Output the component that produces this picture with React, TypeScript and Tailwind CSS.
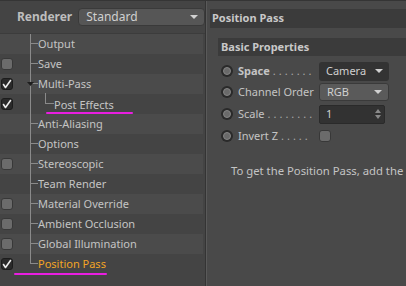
import React from "react";

type Row = { label: string; cb: "none" | "off" | "on"; indent?: boolean; tri?: boolean; last?: boolean; active?: boolean };

const rows: Row[] = [
  { label: "Output", cb: "none" },
  { label: "Save", cb: "off" },
  { label: "Multi-Pass", cb: "on", tri: true },
  { label: "Post Effects", cb: "on", indent: true },
  { label: "Anti-Aliasing", cb: "none" },
  { label: "Options", cb: "none" },
  { label: "Stereoscopic", cb: "off" },
  { label: "Team Render", cb: "none" },
  { label: "Material Override", cb: "off" },
  { label: "Ambient Occlusion", cb: "off" },
  { label: "Global Illumination", cb: "off" },
  { label: "Position Pass", cb: "on", last: true, active: true },
];

function Check() {
  return (
    <svg width="10" height="10" viewBox="0 0 10 10">
      <path d="M1.5 5.5 L3.5 8.5 L8.5 1.5" stroke="#ececec" strokeWidth="1.6" fill="none" strokeLinecap="round" strokeLinejoin="round" />
    </svg>
  );
}

function CheckBox({ on }: { on: boolean }) {
  return on ? (
    <div className="w-[12px] h-[12px] rounded-[3px] bg-[#2a2a2a] border border-[#1c1c1c] flex items-center justify-center">
      <Check />
    </div>
  ) : (
    <div className="w-[12px] h-[12px] rounded-[3px] bg-[#6b6b6b] border border-[#383838]" />
  );
}

function Radio() {
  return (
    <div className="w-[12px] h-[12px] shrink-0 rounded-full bg-[#2a2a2a] flex items-center justify-center">
      <div className="w-[8px] h-[8px] rounded-full bg-[#6a6a6a] border border-[#858585]" />
    </div>
  );
}

function Arrow() {
  return (
    <svg width="8" height="4" viewBox="0 0 8 4">
      <path d="M0 0 L8 0 L4 4 Z" fill="#d0d0d0" />
    </svg>
  );
}

function Dots({ n }: { n: number }) {
  return <span className="font-normal tracking-[3px] ml-[3px] text-[#a8a8a8]">{".".repeat(n)}</span>;
}

export default function App() {
  return (
    <div
      className="w-[406px] h-[286px] flex bg-[#474747] border-t border-[#353535] overflow-hidden text-[11px] text-[#c4c4c4]"
      style={{ fontFamily: '"Noto Sans", "Open Sans", sans-serif' }}
    >
      {/* left */}
      <div className="w-[205px] shrink-0 flex flex-col bg-[#444444]">
        <div className="h-[33px] flex items-center border-b border-[#3c3c3c]">
          <span className="ml-[17px] font-bold text-[#bdbdbd] text-[12px]">Renderer</span>
          <div className="ml-[6px] w-[128px] h-[18px] rounded-[4px] bg-[#565656] border border-[#3a3a3a] flex items-center justify-between pl-[7px] pr-[6px] text-[#d0d0d0] text-[12px]">
            <span>Standard</span>
            <Arrow />
          </div>
        </div>
        {rows.map((r, i) => (
          <div key={r.label} className={`h-[20px] flex items-stretch w-[203px] ${i % 2 === 0 ? "bg-[#4b4b4b]" : "bg-[#444444]"}`}>
            <div className="w-[30px] flex items-center pl-[1px]">
              {r.cb !== "none" && <CheckBox on={r.cb === "on"} />}
            </div>
            {r.indent ? (
              <>
                <div className="w-[15px] border-l border-[#8a8a8a]" />
                <div className="w-[9px] flex flex-col">
                  <div className="h-[10px] border-l border-b border-[#8a8a8a]" />
                </div>
              </>
            ) : (
              <div className="w-[8px] flex flex-col relative">
                <div className="h-[10px] border-l border-b border-[#8a8a8a]" />
                {!r.last && <div className="h-[10px] border-l border-[#8a8a8a]" />}
                {r.tri && (
                  <div className="absolute left-[-3px] top-[8px]">
                    <svg width="7" height="4" viewBox="0 0 7 4"><path d="M0 0 L7 0 L3.5 4 Z" fill="#1e1e1e" /></svg>
                  </div>
                )}
                {r.tri && <div className="absolute left-[15px] top-[19px] w-[1px] h-[1px] bg-[#8a8a8a]" />}
              </div>
            )}
            <div className="flex flex-col justify-center">
              <span className={`leading-[20px] whitespace-nowrap ${r.active ? "text-[#f3a425]" : ""}`}>{r.label}</span>
              {r.indent && <div className="h-[2px] -mt-[3px] -ml-[8px] w-[87px] bg-[#e81ee0] rounded-full" />}
            </div>
          </div>
        ))}
        <div className="flex-1 pl-[14px]">
          <div className="h-[2px] w-[93px] bg-[#e81ee0] rounded-full -mt-[1px]" />
        </div>
      </div>
      {/* divider */}
      <div className="w-[1px] bg-[#343434]" />
      <div className="w-[1px] bg-[#5a5a5a]" />
      {/* right */}
      <div className="flex-1 flex flex-col bg-[#494949] pt-[8px] pl-[3px]">
        <div className="h-[19px] bg-[#3b3b3b] flex items-center pl-[2px] font-bold text-[#c8c8c8]">Position Pass</div>
        <div className="flex-1 flex flex-col pl-[8px] pt-[10px]">
          <div className="h-[18px] bg-[#3b3b3b] flex items-center pl-[3px] font-bold text-[#c8c8c8]">Basic Properties</div>
          <div className="flex flex-col pl-[3px] pt-[5px]">
            <div className="h-[20px] flex items-center">
              <Radio />
              <span className="ml-[5px] w-[81px] shrink-0 whitespace-nowrap font-bold">Space<Dots n={7} /></span>
              <div className="w-[70px] h-[19px] rounded-[3px] bg-[#333333] flex items-center justify-between pl-[7px] pr-[6px] text-[#d0d0d0]">
                <span>Camera</span>
                <Arrow />
              </div>
            </div>
            <div className="h-[20px] flex items-center mt-[1px]">
              <Radio />
              <span className="ml-[5px] w-[81px] shrink-0 whitespace-nowrap">Channel Order</span>
              <div className="w-[70px] h-[18px] rounded-[3px] bg-[#5a5a5a] border border-[#3a3a3a] flex items-center justify-between pl-[7px] pr-[6px] text-[#d0d0d0]">
                <span>RGB</span>
                <Arrow />
              </div>
            </div>
            <div className="h-[20px] flex items-center mt-[2px]">
              <Radio />
              <span className="ml-[5px] w-[81px] shrink-0 whitespace-nowrap">Scale<Dots n={8} /></span>
              <div className="w-[66px] h-[19px] rounded-[2px] bg-[#323232] border border-[#2a2a2a] flex items-center justify-between pl-[6px] pr-[3px] text-[#d0d0d0]">
                <span>1</span>
                <svg width="6" height="10" viewBox="0 0 6 10"><path d="M0 4 L6 4 L3 0 Z M0 6 L6 6 L3 10 Z" fill="#8a8a8a" /></svg>
              </div>
            </div>
            <div className="h-[20px] flex items-center mt-[2px]">
              <Radio />
              <span className="ml-[5px] w-[81px] shrink-0 whitespace-nowrap">Invert Z<Dots n={5} /></span>
              <div className="w-[12px] h-[12px] rounded-[3px] bg-[#6b6b6b] border border-[#383838]" />
            </div>
            <div className="mt-[17px] ml-[10px] whitespace-nowrap text-[11.3px]">To get the Position Pass, add the</div>
          </div>
        </div>
      </div>
    </div>
  );
}
